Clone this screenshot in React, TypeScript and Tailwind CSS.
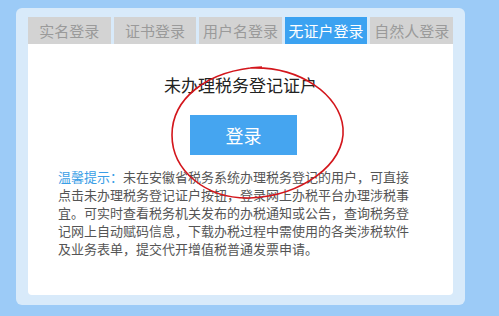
export default function App() {
  return (
    <div className="relative h-screen w-full overflow-hidden bg-[#9ccbf7] pt-[8px] pl-[16px] font-['Noto_Sans_CJK_SC',sans-serif]">
      {/* Login panel */}
      <div className="h-[297px] w-[449px] rounded-[6px] bg-[#d8eafa] pl-[12px] pt-[9px]">
        <div className="flex w-[425px] gap-[3px]">
          {['实名登录', '证书登录', '用户名登录', '无证户登录', '自然人登录'].map((t) => (
            <div
              key={t}
              className={`flex h-[27px] flex-1 items-center justify-center text-[15px] leading-none ${
                t === '无证户登录' ? 'bg-[#3ba2f1] text-white' : 'bg-[#d3d3d3] text-[#9a9a9a]'
              }`}
            >
              {t}
            </div>
          ))}
        </div>
        <div className="flex h-[251px] w-[425px] flex-col items-center rounded-b-[4px] bg-white">
          <div className="mt-[29px] text-[17px] leading-[24px] text-[#222]">未办理税务登记证户</div>
          <button className="ml-[6px] mt-[18px] h-[40px] w-[107px] bg-[#45a5f0] text-[18px] text-white">登录</button>
          <p className="mt-[13px] ml-[30px] w-[353px] self-start text-[13px] leading-[18px] text-[#555]">
            <span className="text-[#3a9ee6]">温馨提示：</span>未在安徽省税务系统办理税务登记的用户，可直接点击未办理税务登记证户按钮，登录网上办税平台办理涉税事宜。可实时查看税务机关发布的办税通知或公告，查询税务登记网上自动赋码信息，下载办税过程中需使用的各类涉税软件及业务表单，提交代开增值税普通发票申请。
          </p>
        </div>
      </div>

      {/* Hand-drawn red circle */}
      <svg className="pointer-events-none absolute left-0 top-0" width="499" height="316" viewBox="0 0 499 316">
        <path
          d="M250 68 C300 66 340 95 343 128 C346 165 300 196 250 198 C205 199 172 170 172 135 C172 100 205 70 262 67"
          fill="none"
          stroke="#d3161c"
          strokeWidth="1.6"
        />
      </svg>
    </div>
  );
}
